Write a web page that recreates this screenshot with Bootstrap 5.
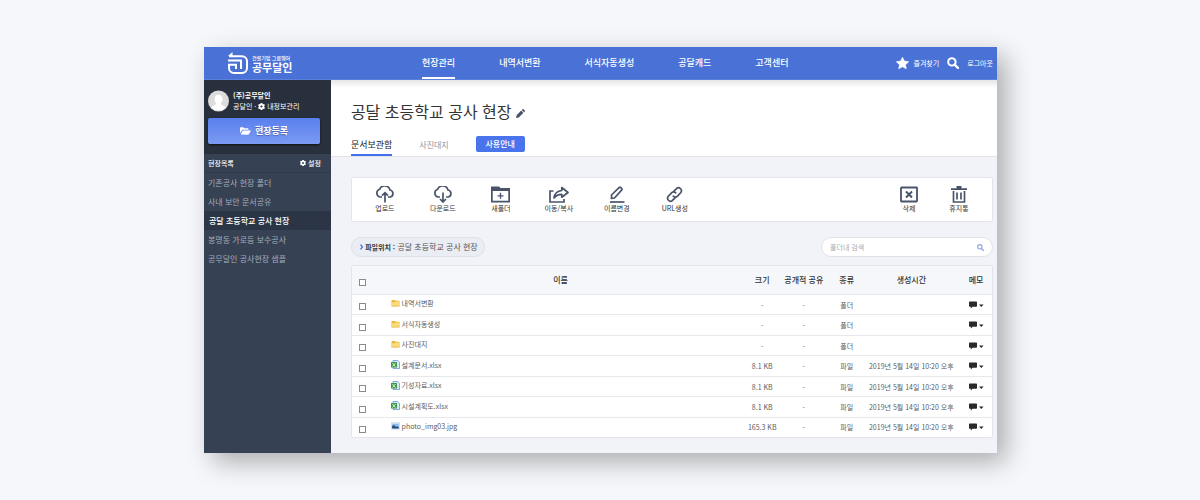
<!DOCTYPE html>
<html lang="ko">
<head>
<meta charset="utf-8">
<meta name="viewport" content="width=device-width, initial-scale=1">
<title>공무달인 - 현장관리</title>
<link href="https://cdn.jsdelivr.net/npm/bootstrap@5.3.0/dist/css/bootstrap.min.css" rel="stylesheet">
<style>
  body { font-family: "Noto Sans CJK KR", sans-serif; font-size: 8px; line-height: 12px; background: #f5f7fa; color: #333; padding: 47px 203px 47px 204px; }
  @media (max-width: 1100px) { body { padding: 16px; } }
  a { text-decoration: none; color: inherit; }
  svg { display: block; flex: none; }
  button { border: 0; padding: 0; background: none; color: inherit; }
  .fs-7 { font-size: 7px; }
  .app { box-shadow: 9px 9px 24px rgba(0,0,0,.3); }

  .topbar { height: 33px; background: #4a72d6; color: #fff; padding: 0 4px 0 24px; border-bottom: 1px solid #5b80de; }
  .brand { width: 194px; gap: 4px; }
  .brand-sub { font-size: 5px; line-height: 7px; font-weight: 500; }
  .brand-name { font-size: 11px; line-height: 12px; font-weight: 700; }
  .menu { gap: 44px; font-size: 9px; font-weight: 500; }
  .menu a { line-height: 28px; padding-top: 2px; border-bottom: 2px solid transparent; }
  .menu a.active { border-color: #fff; }
  .shortcuts { gap: 8px; font-size: 7px; }

  .side { flex: 0 0 16%; background: #364154; color: #fff; }
  .profile { background: #28303d; padding: 10px 11px 10px 4px; }
  .new-site { height: 26px; border-radius: 2px; background: linear-gradient(#5a80ee, #7c9af4); font-weight: 700; font-size: 9px; text-shadow: 0 1px 1px rgba(0,0,0,.3); box-shadow: 0 1px 2px #111; margin-top: 6px; }
  .side-head { height: 19px; padding: 0 10px 0 4px; font-weight: 500; border-bottom: 1px solid #303a4b; }
  .sites a { display: block; line-height: 19px; padding-left: 4px; color: #a4acba; white-space: nowrap; }
  .sites a.active { background: #2c3545; color: #fff; font-weight: 500; padding-left: 5px; }

  .work { background: #f2f3f8; min-width: 0; }
  .page-head { background: linear-gradient(#e6e6e8, #fff 8px); border-bottom: 1px solid #e2e3ea; padding: 19px 4px 0 20px; }
  .page-head h1 { font-size: 16px; line-height: 24px; }
  .tabs { gap: 27px; margin-top: 13px; }
  .tabs a { line-height: 18px; color: #8c929c; border-bottom: 2px solid transparent; }
  .tabs a.active { font-size: 9px; color: #222; border-color: #4272ee; }
  .guide { width: 49px; height: 16px; border-radius: 2px; background: #4a74ec; color: #fff; font-weight: 500; line-height: 16px; }

  .body-pad { padding: 20px 4px 15px 20px; }
  .toolbar { height: 45px; background: #fff; border: 1px solid #e4e5ec; border-radius: 2px; padding: 8px 12px; font-size: 7px; color: #333; }
  .tool { width: 42px; line-height: 10px; display: flex; flex-direction: column; align-items: center; }
  .tool svg { color: #49546a; }
  .pathpill { height: 20px; border: 1px solid #dfe1e9; background: #ebedf4; border-radius: 10px; padding: 0 6px 0 8px; color: #555; }
  .pathpill b { color: #333; }
  .search { width: 172px; height: 20px; background: #fff; border: 1px solid #e0e2ea; border-radius: 10px; padding: 0 8px; }
  .search input { border: 0; outline: 0; padding: 0; min-width: 0; font-size: 7px; background: none; }
  .search input::placeholder { color: #aaa; }
  .search button { color: #97a5dc; }
  .filters { margin: 15px 0 8px; }

  .files { table-layout: fixed; width: 100%; height: 173px; border: 1px solid #e3e5ec; border-collapse: separate; border-spacing: 0; border-radius: 2px; background: #fff; text-align: center; color: #5c5c5c; font-size: 7px; line-height: 10px; }
  .files th { height: 29px; background: #f6f7fb; font-size: 8px; font-weight: 500; color: #333; }
  .files th, .files td { padding: 0; white-space: nowrap; border-bottom: 1px solid #e6e8ee; vertical-align: middle; }
  .files tbody tr:last-child td { border-bottom: 0; }
  .files .file-name { padding: 0 0 3px 17px; text-align: left; }
  .files .tick { padding-top: 4px; }
  .tick input { appearance: none; display: block; width: 7px; height: 7px; margin: 0 auto; border: 1px solid #8b8b8b; background: #fff; }
  .tick input:checked { background: #4272ee; }
  .c-tick { width: 3.4%; } .c-size { width: 4.6%; } .c-share { width: 8.4%; } .c-kind { width: 5%; } .c-time { width: 15.2%; } .c-memo { width: 5%; }
</style>
</head>
<body>
<svg class="d-none" aria-hidden="true">
  <symbol id="gear" viewBox="0 0 16 16"><path fill="currentColor" fill-rule="evenodd" d="M6 0h4l.5 2.200 1.200.6 2.200-.8 2 3.200L14.300 7v2l1.600 1.800-2 3.200-2.200-.8-1.200.6L10 16H6l-.5-2.200-1.200-.6-2.200.8-2-3.200L1.700 9V7L.1 5.200l2-3.200 2.200.8 1.200-.6zM8 5.500a2.500 2.500 0 1 0 0 5 2.500 2.500 0 0 0 0-5z"/></symbol>
  <symbol id="glass" viewBox="0 0 12 12"><circle cx="4.900" cy="4.900" r="3.700" fill="none" stroke="currentColor" stroke-width="2"/><path d="M7.600 7.600 11 11" stroke="currentColor" stroke-width="2.400" stroke-linecap="round"/></symbol>
  <symbol id="folder" viewBox="0 0 9 8"><path fill="#e9b93f" d="M.5 1.500Q.5 1 1 1h3l.7.8H8q.5 0 .5.5v4.700H.5z"/><path fill="#fbdc7c" d="M1 3.300h2.800L5 2.600h3.500V7H.5z"/><path stroke="#e3a935" stroke-width=".7" d="M.5 7.200h8"/></symbol>
  <symbol id="excel" viewBox="0 0 9 9"><path fill="#dbe8fb" stroke="#6d97dc" stroke-width=".8" d="M2 .5h4.700l1.800 1.800v6.200H2z"/><path fill="#3f9a46" d="M0 2h6v5.500H0z"/><path stroke="#d4edd0" d="m1.400 3 3 3.600M4.500 3 1.400 6.600"/></symbol>
  <symbol id="photo" viewBox="0 0 10 8"><path fill="#fff" stroke="#b7bdc6" stroke-width=".6" d="M.4.4h9.200v7.200H.4z"/><path fill="#8cbdee" d="M1.300 1.300h7.400v5.400H1.300z"/><path fill="#244a73" d="M1.300 6.700V4l2-1.200L5.500 5l1.300-.8 1.900 1.300v1.200z"/></symbol>
  <symbol id="memo" viewBox="0 0 15 8"><path fill="#2a2a2a" d="M.8.5h6.400q.8 0 .8.800v3.600q0 .8-.8.8H3.600L1.800 7.500V5.700h-1Q0 5.700 0 4.900V1.300Q0 .5.8.5zM10 3.600h4.600L12.300 6z"/></symbol>
</svg>

<div class="app">
  <header class="topbar d-flex align-items-center">
    <a class="brand d-flex align-items-center" href="#">
      <svg width="20" height="22" viewBox="0 0 20 22" fill="none" stroke="#fff" stroke-width="2"><path d="M1 4.200h13a5 5 0 0 1 5 5V16a5 5 0 0 1-5 5H6a5 5 0 0 1-5-5v-3.300h7V17"/><path d="M0 8.500h13v8.500"/><path fill="#fff" stroke="none" d="M0 4 4.500 0v4z"/></svg>
      <span><span class="brand-sub d-block">건설기업 그룹웨어</span><span class="brand-name d-block">공무달인</span></span>
    </a>
    <nav class="menu d-flex">
      <a class="active" href="#">현장관리</a><a href="#">내역서변환</a><a href="#">서식자동생성</a><a href="#">공달캐드</a><a href="#">고객센터</a>
    </nav>
    <div class="shortcuts d-flex align-items-center ms-auto">
      <a class="d-flex align-items-center gap-1" href="#"><svg width="13" height="12" viewBox="0 0 13 12"><path fill="#fff" stroke="#fff" stroke-width=".6" stroke-linejoin="round" d="m6.500.3 1.900 3.800 4.300.6-3.200 3 .8 4.100-3.800-2-3.800 2 .8-4.100-3.200-3 4.300-.6z"/></svg>즐겨찾기</a>
      <button type="button" aria-label="검색"><svg width="12" height="12"><use href="#glass"/></svg></button>
      <a href="#">로그아웃</a>
    </div>
  </header>

  <div class="d-flex">
    <aside class="side">
      <div class="profile">
        <div class="d-flex align-items-center">
          <svg width="21" height="22" viewBox="0 0 22 22"><circle cx="11" cy="11" r="11" fill="#dcdcdc"/><path fill="#fff" d="M11 4.500c3 0 4.200 2 4.200 4.700 0 2-.9 3.600-1.900 4.500.2 1.700 3.800 2 5.200 4.300A11 11 0 0 1 11 21a11 11 0 0 1-7.500-3c1.400-2.300 5-2.600 5.200-4.300-1-.9-1.900-2.500-1.900-4.500 0-2.700 1.200-4.700 4.200-4.700z"/></svg>
          <div class="ms-1 fs-7">
            <b class="d-block lh-1 mb-1">(주)공무달인</b>
            <a class="d-flex align-items-center lh-1" href="#">공달인 ·&nbsp;<svg width="7" height="7"><use href="#gear"/></svg>&nbsp;내정보관리</a>
          </div>
        </div>
        <button type="button" class="new-site w-100 d-flex align-items-center justify-content-center gap-1"><svg width="11" height="8" viewBox="0 0 11 8"><path fill="#fff" d="M0 6V1q0-.8.8-.8h2.400l1 1h3.500q.8 0 .8.8v.7H3Q2.200 2.700 1.800 3.400zM.7 7.600 2.500 4q.3-.6 1-.6H11L9 7q-.3.700-1 .7z"/></svg>현장등록</button>
      </div>
      <div class="side-head fs-7 d-flex align-items-center justify-content-between"><span>현장목록</span><a class="d-flex align-items-center" href="#"><svg width="6" height="6"><use href="#gear"/></svg>&nbsp;설정</a></div>
      <nav class="sites">
        <a href="#">기존공사 현장 폴더</a>
        <a href="#">사내 보안 문서공유</a>
        <a class="active" href="#">공달 초등학교 공사 현장</a>
        <a href="#">봉명동 가로등 보수공사</a>
        <a href="#">공무달인 공사현장 샘플</a>
      </nav>
    </aside>

    <main class="work flex-grow-1">
      <div class="page-head">
        <div class="d-flex align-items-center">
          <h1 class="m-0 fw-normal">공달 초등학교 공사 현장</h1>
          <button type="button" class="mt-1 ms-1" aria-label="이름 수정"><svg width="9" height="9" viewBox="0 0 9 9"><path fill="#49546a" d="m0 9 .6-2.800 4.600-4.600 2.200 2.200-4.600 4.600zM5.800 1 6.600.2q.5-.4 1 0L8.800 1.400q.4.500 0 1L8 3.200z"/></svg></button>
        </div>
        <div class="tabs d-flex align-items-end">
          <a class="active" href="#">문서보관함</a>
          <a href="#">사진대지</a>
          <button type="button" class="guide mb-1">사용안내</button>
        </div>
      </div>

      <div class="body-pad">
        <div class="toolbar d-flex justify-content-between align-items-start">
          <div class="d-flex gap-3">
            <button type="button" class="tool"><svg width="20" height="17" viewBox="0 0 20 17" fill="none" stroke="currentColor" stroke-width="1.700"><path d="M7 11H5a4 4 0 0 1-.4-7.700A5.500 5.500 0 0 1 15 4a3.600 3.600 0 0 1 .3 7H13M10 16.500V7M7 9.700l3-3 3 3"/></svg>업로드</button>
            <button type="button" class="tool"><svg width="20" height="17" viewBox="0 0 20 17" fill="none" stroke="currentColor" stroke-width="1.700"><path d="M7 11H5a4 4 0 0 1-.4-7.700A5.500 5.500 0 0 1 15 4a3.600 3.600 0 0 1 .3 7H13M10 6.500V16M7 13l3 3 3-3"/></svg>다운로드</button>
            <button type="button" class="tool"><svg width="19" height="17" viewBox="0 0 19 17"><path fill="currentColor" fill-rule="evenodd" d="M0 .5h8l1.500 1.500H19v14.500H0zM1.700 5v9.800h15.600V5z"/><path d="M9.500 6.800v6M6.500 9.800h6" stroke="currentColor" stroke-width="1.300"/></svg>새폴더</button>
            <button type="button" class="tool"><svg width="20" height="17" viewBox="0 0 20 17" fill="none" stroke="currentColor" stroke-width="1.700"><path d="M4.500 5H1v11h14v-3"/><path stroke-linejoin="round" d="M5 12c.5-4.500 3-7 7.800-7.500V1.500L19 6.500l-6.200 4.700V8.300C9.500 8.300 7 9.300 5 12z"/></svg>이동/복사</button>
            <button type="button" class="tool"><svg width="16" height="17" viewBox="0 0 16 17" fill="none" stroke="currentColor" stroke-width="1.700"><path stroke-linejoin="round" d="M2.500 12.500V9l7.800-7.600q.6-.5 1.200 0l1.300 1.300q.5.600 0 1.200L5.500 12z"/><path d="M1 16h14.500"/></svg>이름변경</button>
            <button type="button" class="tool"><svg width="17" height="17" viewBox="0 0 17 17" fill="none" stroke="currentColor" stroke-width="1.700" stroke-linecap="round"><path d="m8 5.200 2.800-2.900a3 3 0 0 1 4.100 4.200l-3.400 3.600a3 3 0 0 1-4.200 0"/><path d="m9 11.800-2.800 2.900a3 3 0 0 1-4.100-4.200l3.400-3.600a3 3 0 0 1 4.200 0"/></svg>URL생성</button>
          </div>
          <div class="d-flex gap-2">
            <button type="button" class="tool"><svg width="18" height="17" viewBox="0 0 18 17" fill="none" stroke="currentColor"><rect x="1" y="1.500" width="16" height="14" rx=".5" stroke-width="1.800"/><path stroke-width="2" d="m6 5.500 6 6M12 5.500l-6 6"/></svg>삭제</button>
            <button type="button" class="tool"><svg width="16" height="17" viewBox="0 0 16 17" fill="none" stroke="currentColor" stroke-width="1.700"><path d="M0 3.200h16M2.500 5v11h11V5M6 6.500v7M10 6.500v7"/><path fill="currentColor" stroke="none" d="M5.500 0h5v3h-5z"/></svg>휴지통</button>
          </div>
        </div>

        <div class="filters d-flex align-items-center justify-content-between">
          <div class="pathpill d-flex align-items-center"><svg width="3" height="6" viewBox="0 0 3 6"><path d="M.5.700 2.500 3 .5 5.300" fill="none" stroke="#3767e6" stroke-width="1.200"/></svg>&nbsp;<b class="fs-7">파일위치 :</b>&nbsp;<span>공달 초등학교 공사 현장</span></div>
          <form class="search d-flex align-items-center" onsubmit="return false"><input class="flex-grow-1" type="text" placeholder="폴더내 검색" aria-label="폴더내 검색"><button type="submit" aria-label="검색"><svg width="7" height="7"><use href="#glass"/></svg></button></form>
        </div>

        <table class="files">
          <colgroup><col class="c-tick"><col><col class="c-size"><col class="c-share"><col class="c-kind"><col class="c-time"><col class="c-memo"></colgroup>
          <thead><tr><th class="tick"><input type="checkbox" aria-label="전체 선택"></th><th>이름</th><th>크기</th><th>공개적 공유</th><th>종류</th><th>생성시간</th><th>메모</th></tr></thead>
          <tbody>
            <tr><td class="tick"><input type="checkbox" aria-label="내역서변환"></td><td class="file-name"><a class="d-flex align-items-center" href="#"><svg width="9" height="8"><use href="#folder"/></svg>&nbsp;내역서변환</a></td><td>-</td><td>-</td><td>폴더</td><td></td><td><button type="button" class="d-block mx-auto" aria-label="메모"><svg width="15" height="8"><use href="#memo"/></svg></button></td></tr>
            <tr><td class="tick"><input type="checkbox" aria-label="서식자동생성"></td><td class="file-name"><a class="d-flex align-items-center" href="#"><svg width="9" height="8"><use href="#folder"/></svg>&nbsp;서식자동생성</a></td><td>-</td><td>-</td><td>폴더</td><td></td><td><button type="button" class="d-block mx-auto" aria-label="메모"><svg width="15" height="8"><use href="#memo"/></svg></button></td></tr>
            <tr><td class="tick"><input type="checkbox" aria-label="사진대지"></td><td class="file-name"><a class="d-flex align-items-center" href="#"><svg width="9" height="8"><use href="#folder"/></svg>&nbsp;사진대지</a></td><td>-</td><td>-</td><td>폴더</td><td></td><td><button type="button" class="d-block mx-auto" aria-label="메모"><svg width="15" height="8"><use href="#memo"/></svg></button></td></tr>
            <tr><td class="tick"><input type="checkbox" aria-label="설계문서.xlsx"></td><td class="file-name"><a class="d-flex align-items-center" href="#"><svg width="9" height="9"><use href="#excel"/></svg>&nbsp;설계문서.xlsx</a></td><td>8.1 KB</td><td>-</td><td>파일</td><td>2019년 5월 14일 10:20 오후</td><td><button type="button" class="d-block mx-auto" aria-label="메모"><svg width="15" height="8"><use href="#memo"/></svg></button></td></tr>
            <tr><td class="tick"><input type="checkbox" aria-label="기성자료.xlsx"></td><td class="file-name"><a class="d-flex align-items-center" href="#"><svg width="9" height="9"><use href="#excel"/></svg>&nbsp;기성자료.xlsx</a></td><td>8.1 KB</td><td>-</td><td>파일</td><td>2019년 5월 14일 10:20 오후</td><td><button type="button" class="d-block mx-auto" aria-label="메모"><svg width="15" height="8"><use href="#memo"/></svg></button></td></tr>
            <tr><td class="tick"><input type="checkbox" aria-label="시설계획도.xlsx"></td><td class="file-name"><a class="d-flex align-items-center" href="#"><svg width="9" height="9"><use href="#excel"/></svg>&nbsp;시설계획도.xlsx</a></td><td>8.1 KB</td><td>-</td><td>파일</td><td>2019년 5월 14일 10:20 오후</td><td><button type="button" class="d-block mx-auto" aria-label="메모"><svg width="15" height="8"><use href="#memo"/></svg></button></td></tr>
            <tr><td class="tick"><input type="checkbox" aria-label="photo_img03.jpg"></td><td class="file-name"><a class="d-flex align-items-center" href="#"><svg width="9" height="8"><use href="#photo"/></svg>&nbsp;photo_img03.jpg</a></td><td>165.3 KB</td><td>-</td><td>파일</td><td>2019년 5월 14일 10:20 오후</td><td><button type="button" class="d-block mx-auto" aria-label="메모"><svg width="15" height="8"><use href="#memo"/></svg></button></td></tr>
          </tbody>
        </table>
      </div>
    </main>
  </div>
</div>
<script src="https://cdn.jsdelivr.net/npm/bootstrap@5.3.0/dist/js/bootstrap.bundle.min.js"></script>
</body>
</html>
